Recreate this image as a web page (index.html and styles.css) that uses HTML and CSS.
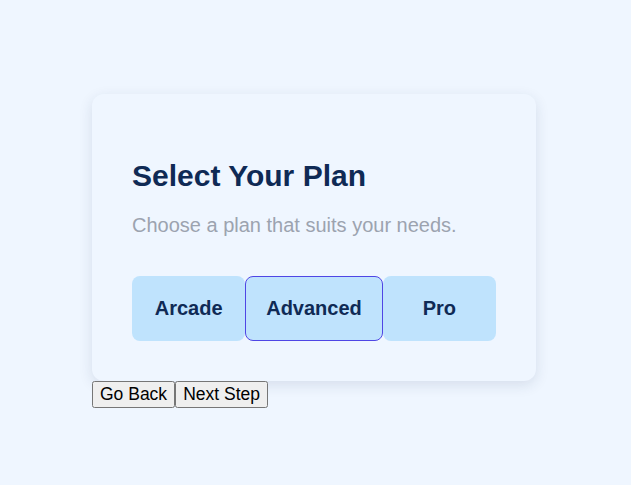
FILE: index.html
```html
<!DOCTYPE html>
<html lang="en">
<head>
<meta charset="utf-8">
<title>Select Your Plan</title>
<link rel="stylesheet" href="styles.css">
</head>
<body>
<main class="wrap">
  <section class="card">
    <h2 class="title">Select Your Plan</h2>
    <p class="subtitle">Choose a plan that suits your needs.</p>
    <div class="plans">
      <button class="plan">Arcade</button>
      <button class="plan selected">Advanced</button>
      <button class="plan">Pro</button>
    </div>
  </section>
  <div class="nav">
    <button class="navbtn">Go Back</button><button class="navbtn">Next Step</button>
  </div>
</main>
</body>
</html>
```

FILE: styles.css
```css
html, body {
  margin: 0;
  background: #eff6ff;
  font-family: "Liberation Sans", Arial, sans-serif;
}
.wrap {
  padding: 94px 0 0 92px;
  width: 444px;
}
.card {
  box-sizing: border-box;
  width: 444px;
  padding: 40px;
  background: #eff6ff;
  border-radius: 12px;
  box-shadow: 0 4px 14px rgba(30, 50, 90, 0.12);
}
.title {
  margin: 25px 0 0;
  font-size: 30px;
  font-weight: 700;
  color: #0f2a55;
  line-height: 34px;
}
.subtitle {
  margin: 21px 0 0;
  font-size: 20px;
  color: #9ca3af;
  line-height: 23px;
}
.plans {
  display: flex;
  margin-top: 39px;
}
.plan {
  flex: 1 1 0;
  padding: 20px;
  border: 1px solid transparent;
  border-radius: 8px;
  background: #bfe3fd;
  color: #0f2a55;
  font-family: "Liberation Sans", Arial, sans-serif;
  font-size: 20px;
  font-weight: 700;
  line-height: 23px;
  white-space: nowrap;
}
.plan.selected {
  border-color: #4f46e5;
}
.nav {
  display: flex;
}
.navbtn {
  font-family: "Liberation Sans", Arial, sans-serif;
  font-size: 17.5px;
}
```
